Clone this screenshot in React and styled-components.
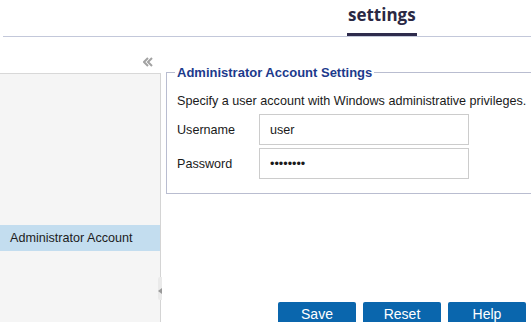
import React from "react";
import styled, { createGlobalStyle } from "styled-components";

const GlobalStyle = createGlobalStyle`
  html, body {
    margin: 0;
    padding: 0;
    background: #ffffff;
  }
  body {
    font-family: "Liberation Sans", Arial, sans-serif;
    color: #1a1a1a;
  }
`;

const Page = styled.div`
  width: 531px;
  height: 322px;
  overflow: hidden;
  display: flex;
  flex-direction: column;
`;

const Header = styled.div`
  height: 36px;
  margin-left: 3px;
  border-bottom: 1px solid #c3c8da;
  display: flex;
  padding-left: 344px;
`;

const Tab = styled.div`
  font-family: "Open Sans", "Noto Sans", sans-serif;
  font-weight: 700;
  font-size: 17px;
  color: #2a2843;
  padding: 4px 1px 0;
  height: 36px;
  box-sizing: border-box;
  border-bottom: ${({ active }) => (active ? "3px solid #2e2b4c" : "none")};
  line-height: 22px;
`;

const Body = styled.div`
  flex: 1;
  display: flex;
`;

const Sidebar = styled.div`
  width: 161px;
  display: flex;
  flex-direction: column;
  position: relative;
`;

const SideTool = styled.div`
  height: 36px;
  display: flex;
  justify-content: flex-end;
  align-items: flex-end;
  padding: 0 6px 6px 0;
  box-sizing: border-box;
`;

const SidePanel = styled.div`
  flex: 1;
  background: #f5f5f5;
  border-top: 1px solid #d8d8d8;
  border-right: 1px solid #d4d4d4;
  padding-top: 151px;
`;

const NavItem = styled.div`
  height: 26px;
  line-height: 26px;
  padding-left: 10px;
  font-size: 12.6px;
  color: #1c1c1c;
  background: ${({ selected }) => (selected ? "#c3ddef" : "transparent")};
`;

const Splitter = styled.div`
  position: absolute;
  left: 158px;
  top: 240px;
  width: 4px;
  height: 23px;
  background: #eaeaea;
  border-radius: 2px 0 0 2px;
  &::after {
    content: "";
    position: absolute;
    left: 0;
    top: 11px;
    border-top: 3px solid transparent;
    border-bottom: 3px solid transparent;
    border-right: 4px solid #9a9a9a;
  }
`;

const Content = styled.div`
  flex: 1;
  padding-left: 5px;
  display: flex;
  flex-direction: column;
  min-width: 0;
`;

const Fieldset = styled.fieldset`
  margin: 28px 0 0;
  width: 400px;
  padding: 14px 0 11px 10px;
  border: 1px solid #b9bdd0;
  border-right: none;
  box-sizing: border-box;
  flex-shrink: 0;
`;

const Legend = styled.legend`
  padding: 0 2px;
  margin-left: -2px;
  font-weight: 700;
  font-size: 13px;
  color: #1c3a8c;
`;

const Note = styled.div`
  font-size: 12.6px;
  color: #1a1a1a;
  margin-bottom: 6px;
  white-space: nowrap;
`;

const FormRow = styled.div`
  display: flex;
  align-items: center;
  margin-bottom: 3px;
`;

const Label = styled.label`
  width: 82px;
  font-size: 12.6px;
  color: #1a1a1a;
`;

const Input = styled.input`
  width: 210px;
  height: 31px;
  box-sizing: border-box;
  border: 1px solid #cccccc;
  padding: 0 0 0 10px;
  font-family: "Liberation Sans", Arial, sans-serif;
  font-size: 12.6px;
  color: #1a1a1a;
  outline: none;
`;

const Buttons = styled.div`
  margin-top: 108px;
  padding-left: 112px;
  display: flex;
  gap: 7px;
`;

const Button = styled.button`
  width: 78px;
  height: 24px;
  border: none;
  border-radius: 2px 2px 0 0;
  background: #0a66ad;
  color: #ffffff;
  font-family: "Liberation Sans", Arial, sans-serif;
  font-size: 14px;
  padding: 0;
  line-height: 22px;
`;

function Chevrons() {
  return (
    <svg width="12" height="10" viewBox="0 0 12 10">
      <path d="M5 1 L1 5 L5 9 M9 1 L5 5 L9 9" fill="none" stroke="#a2a2a2" strokeWidth="2" />
    </svg>
  );
}

export default function App() {
  return (
    <Page>
      <GlobalStyle />
      <Header>
        <Tab active>settings</Tab>
      </Header>
      <Body>
        <Sidebar>
          <SideTool>
            <Chevrons />
          </SideTool>
          <SidePanel>
            <NavItem selected>Administrator Account</NavItem>
          </SidePanel>
          <Splitter />
        </Sidebar>
        <Content>
          <Fieldset>
            <Legend>Administrator Account Settings</Legend>
            <Note>Specify a user account with Windows administrative privileges.</Note>
            <FormRow>
              <Label>Username</Label>
              <Input type="text" defaultValue="user" />
            </FormRow>
            <FormRow>
              <Label>Password</Label>
              <Input type="password" defaultValue="password" />
            </FormRow>
          </Fieldset>
          <Buttons>
            <Button>Save</Button>
            <Button>Reset</Button>
            <Button>Help</Button>
          </Buttons>
        </Content>
      </Body>
    </Page>
  );
}
